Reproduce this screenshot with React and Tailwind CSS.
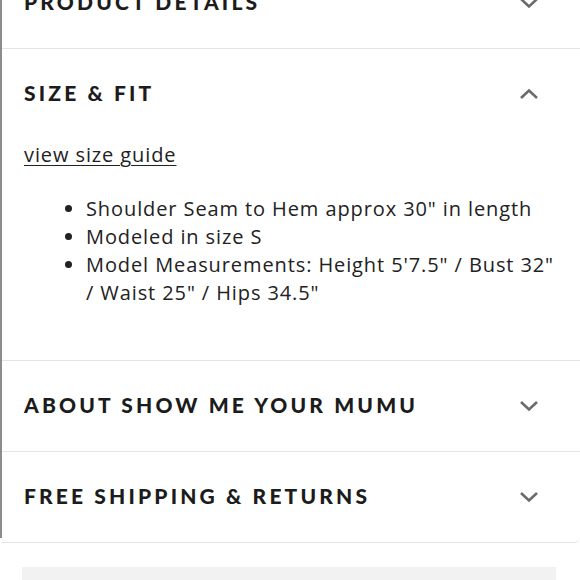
import React from "react";

function Chevron({ up }) {
  return (
    <svg width="20" height="12" viewBox="0 0 20 12" className="shrink-0">
      <path
        d={up ? "M2 10 L10 2.5 L18 10" : "M2 2 L10 9.5 L18 2"}
        fill="none"
        stroke="#6b6b6b"
        strokeWidth="2.6"
      />
    </svg>
  );
}

function Header({ title, up }) {
  return (
    <div className="flex items-center justify-between h-[90px] pl-[22px] pr-[41px]">
      <h3 className="mb-[4px] text-[21px] font-black tracking-[0.15em] text-[#1c1c1c] leading-none font-['Lato',sans-serif]">
        {title}
      </h3>
      <Chevron up={up} />
    </div>
  );
}

export default function App() {
  return (
    <div className="w-[580px] h-[580px] overflow-hidden bg-white">
      <div className="border-l-2 border-[#8c8c8c] h-full">
        <div className="-mt-[42px] border-b border-[#e4e4e4] rounded-br-md">
          <div className="border-b border-[#e4e4e4]">
            <Header title="PRODUCT DETAILS" />
          </div>

          <div className="border-b border-[#e4e4e4] pb-[53px]">
            <Header title="SIZE & FIT" up />
            <div className="pl-[22px] pr-6 pt-[2px] text-[20px] leading-[28px] tracking-[0.045em] text-[#222] font-['Open_Sans',sans-serif]">
              <a className="underline underline-offset-[3px] decoration-1">view size guide</a>
              <ul className="list-disc pl-[62px] mt-[26px]">
                <li>Shoulder Seam to Hem approx 30" in length</li>
                <li>Modeled in size S</li>
                <li>Model Measurements: Height 5'7.5" / Bust 32" / Waist 25" / Hips 34.5"</li>
              </ul>
            </div>
          </div>

          <div className="border-b border-[#e4e4e4]">
            <Header title="ABOUT SHOW ME YOUR MUMU" />
          </div>

          <Header title="FREE SHIPPING & RETURNS" />
        </div>

        <div className="mt-6 ml-[20px] mr-6 h-[40px] bg-[#f2f2f2]" />
      </div>
    </div>
  );
}
